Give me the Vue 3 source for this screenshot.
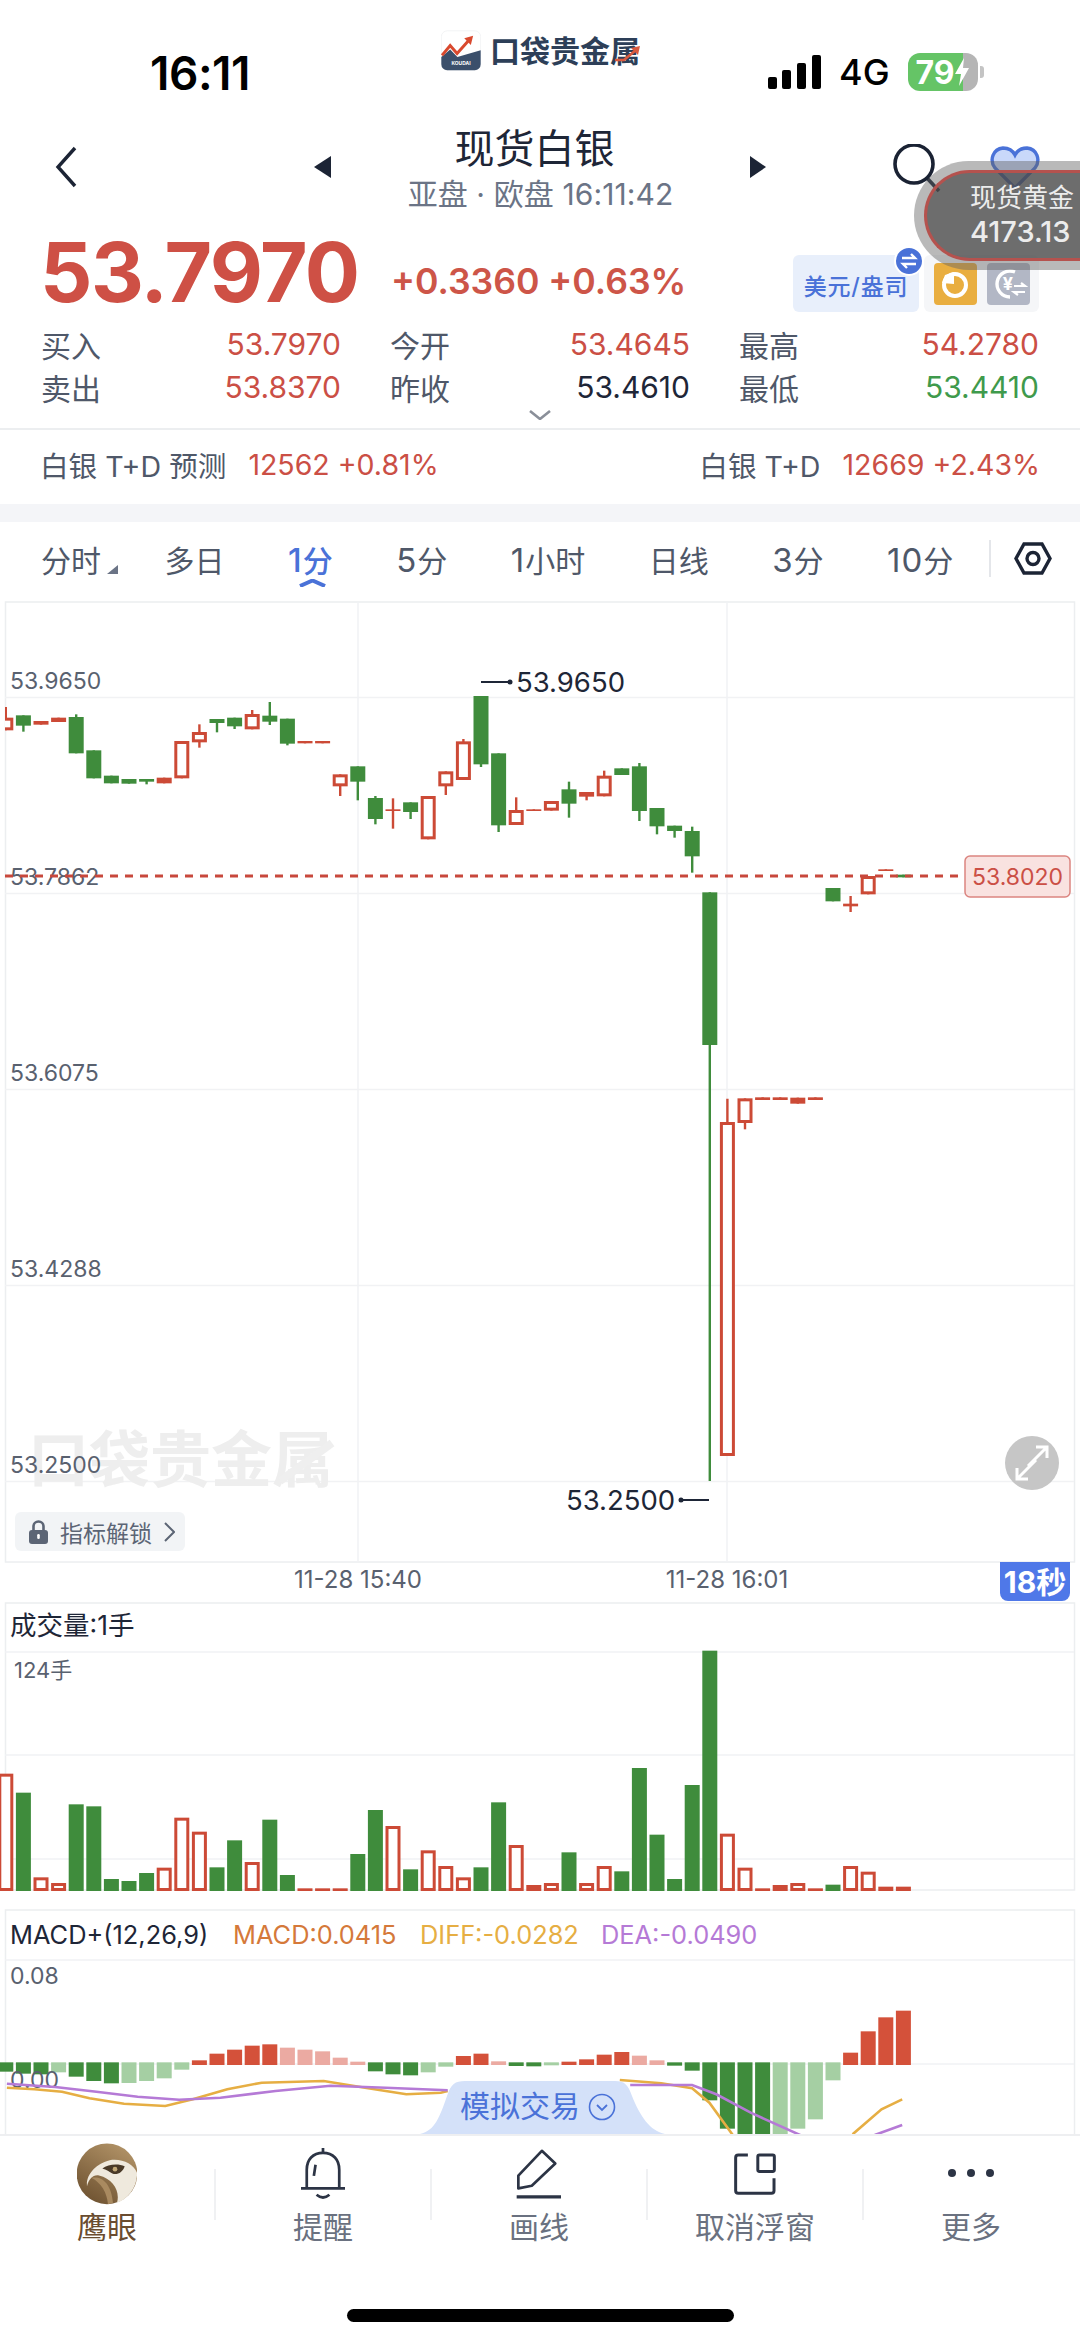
<template>
  <div class="page">
    <!-- status bar -->
    <div class="status">
      <span class="status__time">16:11</span>
      <div class="logo">
        <svg class="logo__icon" width="40" height="41" viewBox="122 60 122 122">
          <rect x="123" y="61" width="120" height="120" rx="18" fill="#fff" stroke="#eceef0" stroke-width="2" />
          <path d="M123 141L150 118L172 141L243 120V163a18 18 0 0 1-18 18H141a18 18 0 0 1-18-18Z" fill="#3b4f6b" />
          <path d="M125 136L150 106L171 130L207 90" fill="none" stroke="#d9492e" stroke-width="9" />
          <path d="M193 84L220 76L213 104Z" fill="#d9492e" />
          <text x="183" y="166" text-anchor="middle" class="logo__koudai">KOUDAI</text>
        </svg>
        <span class="logo__text">口袋贵金属</span>
        <svg class="logo__arrow" width="26" height="16" viewBox="0 0 26 16">
          <path d="M0 14H9L21 4" fill="none" stroke="#d9593e" stroke-width="2.6" />
          <path d="M16 2L25 0L23 9Z" fill="#d9593e" />
        </svg>
      </div>
      <div class="status__right">
        <svg width="53" height="34" viewBox="0 0 53 34">
          <rect x="0" y="22" width="9" height="12" rx="2" />
          <rect x="14" y="15" width="9" height="19" rx="2" />
          <rect x="29" y="8" width="9" height="26" rx="2" />
          <rect x="44" y="0" width="9" height="34" rx="2" />
        </svg>
        <span class="status__net">4G</span>
        <div class="battery">
          <span>79</span>
          <svg width="14" height="28" viewBox="0 0 14 28"><path d="M9 0L0 16H6L4 28L14 10H8Z" fill="#fff" /></svg>
        </div>
      </div>
    </div>

    <!-- title bar -->
    <div class="nav">
      <svg class="nav__back" width="22" height="42" viewBox="0 0 22 42">
        <path d="M20 2L3 21L20 40" fill="none" stroke="#1c2435" stroke-width="3.4" />
      </svg>
      <svg class="nav__tri nav__tri--left" width="17" height="22" viewBox="0 0 17 22"><path d="M17 0V22L0 11Z" fill="#1c2435" /></svg>
      <div class="nav__center">
        <div class="nav__title">现货白银</div>
        <div class="nav__sub">亚盘 · 欧盘 16:11:42</div>
      </div>
      <svg class="nav__tri" width="16" height="22" viewBox="0 0 16 22"><path d="M0 0V22L16 11Z" fill="#1c2435" /></svg>
      <svg class="nav__search" width="48" height="50" viewBox="0 0 48 50">
        <circle cx="21" cy="20" r="19" fill="none" stroke="#1a2233" stroke-width="3.6" />
        <path d="M34 34L46 47" stroke="#1a2233" stroke-width="3.6" />
      </svg>
      <svg class="nav__heart" width="50" height="44" viewBox="0 0 50 44">
        <path d="M25 42L5 22C-1 14 3 3 13 2C19 2 23 5 25 9C27 5 31 2 37 2C47 3 51 14 45 22Z" fill="#c9d8fa" stroke="#4a72d8" stroke-width="3.4" />
      </svg>
    </div>

    <!-- price row -->
    <div class="quote">
      <span class="quote__price">53.7970</span>
      <span class="quote__delta">+0.3360 +0.63%</span>
      <div class="unit">
        美元/盎司
        <svg class="unit__badge" width="30" height="30" viewBox="0 0 30 30">
          <circle cx="15" cy="15" r="14" fill="#4a72d8" stroke="#fff" stroke-width="2" />
          <path d="M8 12H21L17 8M22 18H9L13 22" fill="none" stroke="#fff" stroke-width="2.4" />
        </svg>
      </div>
      <div class="tools">
        <svg class="tools__btn tools__btn--orange" width="43" height="42" viewBox="0 0 43 42">
          <circle cx="21" cy="22" r="11" fill="none" stroke="#fff" stroke-width="4" />
          <path d="M8 20L11 12L20 9V21Z" fill="#fff" />
        </svg>
        <svg class="tools__btn tools__btn--gray" width="43" height="42" viewBox="0 0 43 42">
          <path d="M28 9A13 13 0 1 0 23 34" fill="none" stroke="#fff" stroke-width="3.4" />
          <text x="21" y="27" text-anchor="middle" class="tools__yen">¥</text>
          <path d="M27 23H38L34 20M38 29H27L31 32" fill="none" stroke="#fff" stroke-width="2.2" />
        </svg>
      </div>
    </div>

    <!-- open / close / high / low -->
    <div class="stats">
      <div v-for="item in stats" :key="item.label" class="stats__cell">
        <span class="stats__label">{{ item.label }}</span>
        <span class="stats__value" :class="item.tone">{{ item.value }}</span>
      </div>
      <svg class="stats__more" width="22" height="10" viewBox="0 0 22 10">
        <path d="M1 1L11 9L21 1" fill="none" stroke="#8a8f99" stroke-width="2.6" />
      </svg>
    </div>

    <div class="td">
      <div class="td__item">
        <span class="td__name">白银 T+D 预测</span>
        <span class="td__num">12562 +0.81%</span>
      </div>
      <div class="td__item">
        <span class="td__name">白银 T+D</span>
        <span class="td__num">12669 +2.43%</span>
      </div>
    </div>
    <div class="band"></div>

    <!-- period tabs -->
    <div class="tabs">
      <span
        v-for="tab in tabs"
        :key="tab.num + tab.unit"
        class="tabs__item"
        :class="{ 'tabs__item--on': tab.num === '1' && tab.unit === '分' }"
      >
        <span v-if="tab.num" class="tabs__num">{{ tab.num }}</span>{{ tab.unit }}
        <svg v-if="tab.unit === '分时'" class="tabs__tri" width="11" height="9" viewBox="0 0 11 9"><path d="M11 0V9H0Z" fill="#6b7486" /></svg>
        <svg v-if="tab.num === '1' && tab.unit === '分'" class="tabs__caret" width="27" height="8" viewBox="0 0 27 8">
          <path d="M1 7L13.5 1.5L26 7" fill="none" stroke="#4a72d8" stroke-width="4" />
        </svg>
      </span>
      <span class="tabs__line"></span>
      <svg class="tabs__hex" width="38" height="33" viewBox="0 0 38 33">
        <path d="M10 2H28L36 16.5L28 31H10L2 16.5Z" fill="none" stroke="#1c2435" stroke-width="3.4" />
        <circle cx="19" cy="16.5" r="6" fill="none" stroke="#1c2435" stroke-width="3.4" />
      </svg>
    </div>

    <!-- main candle chart + time axis -->
    <div class="panel">
      <svg class="chart" width="1080" height="1001" viewBox="0 600 1080 1001">
        <defs>
          <clipPath id="plot"><rect x="5" y="600" width="1069" height="1001" /></clipPath>
        </defs>
        <rect x="5.5" y="601" width="1069" height="960" fill="#fff" stroke="#eceef0" stroke-width="1.5" />
        <line v-for="y in mainGrid" :key="y" x1="5" x2="1074" :y1="y" :y2="y" class="grid" />
        <line v-for="x in [358, 727]" :key="x" :x1="x" :x2="x" y1="601" y2="1561" class="grid" />

        <text x="28" y="1481" class="watermark">口袋贵金属</text>
        <path d="M280 1480L332 1442" stroke="#efefef" stroke-width="8" />

        <text v-for="l in mainLabels" :key="l.t" x="10" :y="l.y" class="axis">{{ l.t }}</text>

        <g clip-path="url(#plot)">
          <g v-for="c in candles" :key="c.x">
            <line :x1="c.x" :x2="c.x" :y1="c.wt" :y2="c.wb" :stroke="c.color" stroke-width="2.4" />
            <rect
              v-if="c.hollow"
              :x="c.x - 6"
              :y="c.top + 1.5"
              width="12"
              :height="c.h - 3"
              fill="#fff"
              :stroke="c.color"
              stroke-width="3"
            />
            <rect v-else :x="c.x - 7.5" :y="c.top" width="15" :height="c.h" :fill="c.color" />
          </g>
        </g>

        <line x1="5" x2="965" y1="875" y2="875" stroke="#c8483c" stroke-width="3" stroke-dasharray="8 7" />
        <rect x="965" y="855" width="105" height="41" rx="5" fill="#f9e2e0" stroke="#db8580" stroke-width="1.5" />
        <text x="1017.5" y="884" text-anchor="middle" class="axis axis--red">53.8020</text>

        <path d="M481 681H509" stroke="#1e2637" stroke-width="2" />
        <circle cx="510" cy="681" r="2.5" fill="#1e2637" />
        <text x="516" y="691" class="mark">53.9650</text>
        <path d="M682 1499H709" stroke="#1e2637" stroke-width="2" />
        <circle cx="681" cy="1499" r="2.5" fill="#1e2637" />
        <text x="566" y="1509" class="mark">53.2500</text>

        <circle cx="1032" cy="1462" r="27" fill="#c6c6c6" />
        <path d="M1028 1465L1047 1446M1036 1446H1047V1457M1036 1459L1017 1478M1017 1467V1478H1028" fill="none" stroke="#fff" stroke-width="3" />

        <text x="358" y="1587" text-anchor="middle" class="axis axis--time">11-28 15:40</text>
        <text x="727" y="1587" text-anchor="middle" class="axis axis--time">11-28 16:01</text>
        <path d="M1000 1561H1070V1592a8 8 0 0 1-8 8H1008a8 8 0 0 1-8-8Z" fill="#4f78e8" />
        <text x="1035" y="1592" text-anchor="middle" class="badge">18秒</text>
      </svg>

      <div class="unlock">
        <svg width="19" height="24" viewBox="0 0 19 24">
          <path d="M4.5 11V6.5a5 5 0 0 1 10 0V11" fill="none" stroke="#5c6575" stroke-width="2.6" />
          <rect x="0" y="10" width="19" height="14" rx="3" fill="#5c6575" />
          <rect x="8.2" y="14" width="2.6" height="5" rx="1.3" fill="#fff" />
        </svg>
        <span>指标解锁</span>
        <svg width="11" height="20" viewBox="0 0 11 20"><path d="M1 1L10 10L1 19" fill="none" stroke="#5c6575" stroke-width="2" /></svg>
      </div>
    </div>

    <!-- volume -->
    <svg class="chart" width="1080" height="307" viewBox="0 1601 1080 307">
      <rect x="5.5" y="1602" width="1069" height="287" fill="#fff" stroke="#eceef0" stroke-width="1.5" />
      <line v-for="y in [1651, 1754, 1858]" :key="y" x1="5" x2="1074" :y1="y" :y2="y" class="grid" />
      <text x="10" y="1634" class="legend legend--big">成交量:1手</text>
      <text x="14" y="1677" class="axis axis--small">124手</text>
      <g v-for="b in volumes" :key="b.x">
        <rect v-if="b.hollow" :x="b.x - 6" :y="b.top + 1.5" width="12" :height="b.h - 3" fill="#fff" :stroke="b.color" stroke-width="3" />
        <rect v-else :x="b.x - 7.5" :y="b.top" width="15" :height="b.h" :fill="b.color" />
      </g>
    </svg>

    <!-- macd -->
    <svg class="chart" width="1080" height="225" viewBox="0 1908 1080 225">
      <rect x="5.5" y="1909" width="1069" height="240" fill="#fff" stroke="#eceef0" stroke-width="1.5" />
      <line x1="5" x2="1074" y1="1959" y2="1959" class="grid" />
      <line x1="5" x2="1074" y1="2063" y2="2063" class="grid" />
      <text x="10" y="1943" class="legend">MACD+(12,26,9)</text>
      <text x="233" y="1943" class="legend legend--macd">MACD:0.0415</text>
      <text x="420" y="1943" class="legend legend--diff">DIFF:-0.0282</text>
      <text x="601" y="1943" class="legend legend--dea">DEA:-0.0490</text>
      <text x="10" y="1983" class="axis">0.08</text>
      <g v-for="b in macdBars" :key="b.x">
        <rect :x="b.x - 7.5" :y="b.top" width="15" :height="b.h" :fill="b.fill" />
      </g>
      <text x="10" y="2087" class="axis">0.00</text>
      <polyline v-for="l in macdLines" :key="l.points" :points="l.points" fill="none" :stroke="l.color" stroke-width="2.6" />

      <path d="M420 2133C435 2130 440 2115 447 2095C451 2083 455 2080 465 2080H615C625 2080 628 2084 632 2095C640 2115 650 2130 665 2133Z" fill="#d4e1f9" />
      <text x="460" y="2116" class="sim">模拟交易</text>
      <circle cx="602" cy="2106" r="12.5" fill="none" stroke="#4a72d8" stroke-width="1.6" />
      <path d="M597 2104L602 2109L607 2104" fill="none" stroke="#4a72d8" stroke-width="1.8" />
    </svg>

    <!-- bottom actions -->
    <div class="actions">
      <div class="actions__item actions__item--eagle">
        <svg width="60" height="61" viewBox="52 22 180 183">
          <defs>
            <linearGradient id="eagleBg" x1="0.8" y1="0" x2="0.2" y2="1">
              <stop offset="0" stop-color="#b39468" />
              <stop offset="1" stop-color="#6d5130" />
            </linearGradient>
          </defs>
          <circle cx="142" cy="113" r="91" fill="url(#eagleBg)" />
          <path d="M82 150C78 115 110 82 150 72C185 66 222 82 232 110C234 150 205 190 172 200C182 165 160 128 118 118C100 115 88 128 82 150Z" fill="#efe9dd" />
          <path d="M95 125C125 118 155 140 160 200L145 204C142 170 125 140 95 125Z" fill="#a98a60" />
          <path d="M128 97C145 84 175 82 195 90C190 108 172 118 158 112C150 108 140 100 128 97Z" fill="#4a3a28" />
          <circle cx="166" cy="99" r="7" fill="#c2a877" />
        </svg>
        <span>鹰眼</span>
      </div>
      <i></i>
      <div class="actions__item">
        <svg width="44" height="52" viewBox="725 35 130 155">
          <path d="M742 155V100C742 70 760 50 790 50C820 50 838 70 838 100V155" fill="none" stroke="#2c3445" stroke-width="8" />
          <path d="M725 155H855M790 36V48M768 85L763 118M771 174Q790 190 809 174" fill="none" stroke="#2c3445" stroke-width="8" />
        </svg>
        <span>提醒</span>
      </div>
      <i></i>
      <div class="actions__item">
        <svg width="46" height="50" viewBox="48 38 137 150">
          <path d="M125 44L165 82L95 148L55 156V118Z" fill="none" stroke="#2c3445" stroke-width="8" stroke-linejoin="round" />
          <path d="M50 181H182" stroke="#2c3445" stroke-width="10" />
        </svg>
        <span>画线</span>
      </div>
      <i></i>
      <div class="actions__item">
        <svg width="42" height="42" viewBox="703 50 127 127">
          <path d="M745 56H716Q708 56 708 64V164Q708 172 716 172H816Q824 172 824 164V126" fill="none" stroke="#2c3445" stroke-width="9" />
          <rect x="775" y="56" width="50" height="50" rx="5" fill="none" stroke="#2c3445" stroke-width="9" />
        </svg>
        <span>取消浮窗</span>
      </div>
      <i></i>
      <div class="actions__item">
        <svg width="46" height="52" viewBox="0 0 46 52">
          <circle cx="4" cy="25" r="4" fill="#2c3445" />
          <circle cx="23" cy="25" r="4" fill="#2c3445" />
          <circle cx="42" cy="25" r="4" fill="#2c3445" />
        </svg>
        <span>更多</span>
      </div>
    </div>
    <div class="home"><span></span></div>

    <!-- floating gold ticker -->
    <div class="float">
      <div class="float__inner">
        <span class="float__name">现货黄金</span>
        <span class="float__num">4173.13</span>
      </div>
    </div>
  </div>
</template>

<script setup>
const GREEN = '#3f8c3c'
const RED = '#cc4a36'

const stats = [
  { label: '买入', value: '53.7970', tone: 'up' },
  { label: '今开', value: '53.4645', tone: 'up' },
  { label: '最高', value: '54.2780', tone: 'up' },
  { label: '卖出', value: '53.8370', tone: 'up' },
  { label: '昨收', value: '53.4610', tone: 'flat' },
  { label: '最低', value: '53.4410', tone: 'down' },
]

const tabs = [
  { num: '', unit: '分时' },
  { num: '', unit: '多日' },
  { num: '1', unit: '分' },
  { num: '5', unit: '分' },
  { num: '1', unit: '小时' },
  { num: '', unit: '日线' },
  { num: '3', unit: '分' },
  { num: '10', unit: '分' },
]

const mainGrid = [696.5, 892.5, 1088.5, 1284.5, 1480.5]
const mainLabels = [
  { t: '53.9650', y: 688 },
  { t: '53.7862', y: 884 },
  { t: '53.6075', y: 1080 },
  { t: '53.4288', y: 1276 },
  { t: '53.2500', y: 1472 },
]

const barX = (i) => 5.8 + 17.6 * i

// kind, top, bottom, wick top, wick bottom (y measured as 3x offset from 620)
const rawCandles = [
  ['r', 290, 328, 258, 328], ['g', 283, 314, 283, 332], ['d', 300, 311], ['d', 290, 303],
  ['g', 288, 397, 280, 397], ['g', 388, 472], ['g', 464, 487], ['g', 474, 488],
  ['g', 474, 482, 474, 490], ['r', 470, 487], ['r', 360, 472], ['r', 333, 364, 310, 380],
  ['g', 294, 306, 294, 334], ['g', 290, 316, 290, 324], ['r', 279, 325, 267, 325], ['g', 284, 302, 243, 312],
  ['g', 293, 368, 293, 373], ['d', 360, 367], ['d', 360, 367], ['r', 460, 496, 460, 525],
  ['g', 436, 482, 436, 538], ['g', 531, 594, 525, 610], ['d', 565, 570, 532, 623], ['g', 544, 573, 544, 594],
  ['r', 525, 655], ['r', 451, 496, 451, 522], ['r', 361, 477, 354, 477], ['g', 225, 430, 225, 438],
  ['g', 397, 613, 397, 633], ['r', 567, 612, 529, 612], ['d', 565, 570], ['r', 540, 569],
  ['g', 505, 548, 482, 590], ['r', 513, 527, 513, 538], ['r', 464, 526, 449, 526], ['g', 442, 462],
  ['g', 436, 570, 426, 600], ['g', 561, 616, 561, 640], ['g', 614, 630, 614, 650], ['g', 630, 706, 617, 755],
  ['g', 814, 1272, 814, 2580], ['r', 1503, 2505, 1433, 2505], ['r', 1432, 1506, 1432, 1525], ['d', 1429, 1437],
  ['d', 1429, 1437], ['r', 1430, 1448], ['d', 1429, 1437], ['g', 801, 841],
  ['d', 848, 856, 825, 873], ['r', 765, 820], ['d', 745, 750], ['g', 761, 769],
]

const candles = rawCandles.map(([kind, top, bottom, wt, wb], i) => {
  const toY = (z) => 620 + z / 3
  return {
    x: barX(i),
    top: toY(top),
    h: (bottom - top) / 3,
    wt: toY(wt ?? top),
    wb: toY(wb ?? bottom),
    color: kind === 'g' ? GREEN : RED,
    hollow: kind === 'r',
  }
})

const rawVolumes = [
  ['r', 578], ['g', 635], ['r', 889], ['r', 906], ['g', 670], ['g', 676], ['g', 894], ['g', 900],
  ['g', 876], ['r', 860], ['r', 710], ['r', 752], ['g', 859], ['g', 778], ['r', 843], ['g', 716],
  ['g', 882], ['d', 922], ['d', 922], ['d', 922], ['g', 819], ['g', 687], ['r', 735], ['g', 865],
  ['r', 808], ['r', 855], ['r', 889], ['g', 859], ['g', 664], ['r', 792], ['r', 912], ['r', 906],
  ['g', 814], ['r', 906], ['r', 855], ['g', 871], ['g', 561], ['g', 761], ['g', 894], ['g', 612],
  ['g', 209], ['r', 758], ['r', 860], ['d', 922], ['r', 912], ['r', 906], ['d', 922], ['g', 911],
  ['r', 855], ['r', 872], ['d', 917], ['d', 917],
]

const volumes = rawVolumes.map(([kind, top], i) => ({
  x: barX(i),
  top: 1580 + top / 3,
  h: (930 - top) / 3,
  color: kind === 'g' ? GREEN : RED,
  hollow: kind === 'r',
}))

// value is the far end of the bar, 3x offset from 1900; zero sits at 488
const rawMacd = [
  ['G', 512], ['G', 518], ['G', 520], ['g', 514], ['G', 527], ['G', 540], ['G', 547], ['g', 546],
  ['g', 540], ['g', 532], ['g', 506], ['R', 478], ['R', 458], ['R', 446], ['R', 434], ['R', 430],
  ['r', 440], ['r', 446], ['r', 451], ['r', 470], ['r', 482], ['G', 511], ['G', 520], ['G', 523],
  ['g', 514], ['g', 497], ['R', 465], ['R', 458], ['r', 481], ['G', 495], ['G', 496], ['g', 493],
  ['R', 482], ['R', 475], ['R', 461], ['R', 453], ['r', 464], ['r', 478], ['G', 494], ['G', 509],
  ['G', 598], ['G', 683], ['G', 720], ['G', 720], ['g', 720], ['g', 683], ['g', 655], ['g', 538],
  ['R', 455], ['R', 391], ['R', 349], ['R', 329],
]

const macdFill = { G: GREEN, g: '#a5cfa3', R: '#d4513a', r: '#ebaaa2' }

const macdBars = rawMacd.map(([kind, end], i) => {
  const up = kind === 'R' || kind === 'r'
  const base = up ? 492 : 484
  return {
    x: barX(i),
    top: 1900 + Math.min(end, base) / 3,
    h: Math.abs(end - base) / 3,
    fill: macdFill[kind],
  }
})

const toPoints = (pts) => pts.map(([x, y]) => `${(x / 1.452).toFixed(1)},${(1900 + y / 3).toFixed(1)}`).join(' ')

const macdLines = [
  { color: '#e6ae43', points: toPoints([[10, 560], [50, 565], [90, 572], [130, 592], [180, 608], [240, 615], [280, 595], [330, 565], [380, 545], [470, 540], [530, 560], [590, 580], [640, 575], [650, 570]]) },
  { color: '#e6ae43', points: toPoints([[900, 537], [960, 547], [1005, 562], [1030, 605], [1065, 705]]) },
  { color: '#e6ae43', points: toPoints([[1238, 700], [1280, 625], [1310, 595]]) },
  { color: '#b57ad6', points: toPoints([[10, 548], [80, 558], [140, 572], [200, 587], [260, 596], [320, 590], [400, 570], [480, 554], [560, 560], [650, 568]]) },
  { color: '#b57ad6', points: toPoints([[915, 552], [1005, 552], [1040, 580], [1090, 635], [1165, 705]]) },
  { color: '#b57ad6', points: toPoints([[1270, 702], [1310, 672]]) },
]
</script>

<style scoped>
.page {
  position: relative;
  width: 1080px;
  height: 2341px;
  overflow: hidden;
  background: #fff;
  color: #1e2637;
  font-family: Inter, "Noto Sans CJK SC", sans-serif;
}

.status {
  position: relative;
  height: 125px;
}
.status__time {
  position: absolute;
  left: 150px;
  top: 49px;
  font-size: 46px;
  line-height: 48px;
  font-weight: 600;
  letter-spacing: -0.5px;
  color: #000;
}
.logo {
  position: absolute;
  left: 441px;
  top: 30px;
  display: flex;
  align-items: center;
  gap: 9px;
}
.logo__koudai {
  font: 700 15px Inter, sans-serif;
  fill: #fff;
}
.logo__text {
  font-size: 30px;
  font-weight: 700;
  line-height: 40px;
  color: #2d3f58;
}
.logo__arrow {
  position: absolute;
  left: 174px;
  top: 16px;
}
.status__right {
  position: absolute;
  left: 768px;
  top: 53px;
  display: flex;
  align-items: center;
  gap: 18px;
}
.status__net {
  font-size: 36px;
  line-height: 38px;
  font-weight: 500;
  color: #000;
}
.battery {
  position: relative;
  display: flex;
  align-items: center;
  width: 70px;
  height: 38px;
  padding-left: 8px;
  box-sizing: border-box;
  border-radius: 12px;
  background: linear-gradient(90deg, #65c466 78%, #b5b5b5 78%);
  color: #fff;
  font-size: 32px;
  font-weight: 700;
}
.battery::after {
  content: '';
  position: absolute;
  right: -6px;
  top: 13px;
  width: 4px;
  height: 12px;
  border-radius: 0 3px 3px 0;
  background: #c4c4c4;
}

.nav {
  display: flex;
  align-items: center;
  height: 95px;
}
.nav__back {
  margin-left: 55px;
  margin-top: -11px;
}
.nav__tri {
  margin-top: -11px;
}
.nav__tri--left {
  margin-left: 237px;
}
.nav__center {
  width: 419px;
  margin-top: -4px;
  text-align: center;
}
.nav__title {
  padding-right: 12px;
  font-size: 40px;
  line-height: 46px;
}
.nav__sub {
  font-size: 30px;
  line-height: 44px;
  letter-spacing: 0.1px;
  color: #6b7486;
}
.nav__search {
  margin-left: 127px;
  margin-top: -7px;
}
.nav__heart {
  margin-left: 49px;
  margin-top: -9px;
}

.quote {
  display: flex;
  align-items: center;
  height: 105px;
  padding-left: 40px;
  box-sizing: border-box;
}
.quote__price {
  width: 352px;
  font-size: 82px;
  line-height: 100px;
  font-weight: 700;
  color: #ce5045;
  letter-spacing: -1.5px;
}
.quote__delta {
  width: 401px;
  margin-top: 18px;
  margin-left: -1px;
  font-size: 35.6px;
  font-weight: 600;
  color: #cd5548;
  white-space: nowrap;
}
.unit {
  position: relative;
  width: 126px;
  height: 57px;
  margin-top: 22px;
  margin-left: 1px;
  border-radius: 6px;
  background: #e8effb;
  color: #4a72d8;
  font-size: 23px;
  font-weight: 500;
  line-height: 64px;
  letter-spacing: 0.8px;
  text-align: center;
  white-space: nowrap;
}
.unit__badge {
  position: absolute;
  right: -5px;
  top: -9px;
}
.tools {
  display: flex;
  align-items: flex-start;
  gap: 10px;
  width: 115px;
  height: 57px;
  margin: 22px 0 0 5px;
  padding: 8px 0 0 10px;
  box-sizing: border-box;
  border-radius: 6px;
  background: #f5f6f8;
}
.tools__btn {
  border-radius: 4px;
  flex: none;
}
.tools__btn--orange {
  background: #e9ae40;
}
.tools__btn--gray {
  background: #b2b7c5;
}
.tools__yen {
  font: 700 18px Inter, sans-serif;
  fill: #fff;
}

.stats {
  position: relative;
  display: grid;
  grid-template-columns: repeat(3, 300px);
  grid-auto-rows: 43px;
  column-gap: 49px;
  height: 103px;
  padding-left: 41px;
  border-bottom: 2px solid #eceef0;
}
.stats__cell {
  display: flex;
  align-items: center;
  justify-content: space-between;
  margin-top: -5px;
}
.stats__label {
  font-size: 30px;
  color: #4f5869;
}
.stats__value {
  font-size: 30px;
}
.up {
  color: #cb4f45;
}
.flat {
  color: #1e2637;
}
.down {
  color: #3f9a4c;
}
.stats__more {
  position: absolute;
  left: 529px;
  top: 85px;
}

.td {
  display: flex;
  justify-content: space-between;
  align-items: center;
  height: 68px;
  padding: 0 40px 6px 40px;
}
.td__item {
  display: flex;
  align-items: center;
  gap: 22px;
}
.td__name {
  font-size: 28.6px;
  color: #4f5869;
}
.td__num {
  font-size: 28.5px;
  color: #cb4f45;
}
.band {
  height: 18px;
  background: #f4f5f8;
}

.tabs {
  display: flex;
  align-items: center;
  height: 73px;
  padding: 0 0 6px 41px;
  gap: 63.5px;
  color: #4f5869;
  font-size: 30px;
}
.tabs__item {
  position: relative;
  flex: none;
  white-space: nowrap;
}
.tabs__num {
  font-size: 33px;
  letter-spacing: 1px;
}
.tabs__item--on {
  color: #4a72d8;
  font-weight: 500;
}
.tabs__tri {
  position: absolute;
  right: -17px;
  bottom: 7px;
}
.tabs__caret {
  position: absolute;
  left: 11px;
  top: 42px;
}
.tabs__line {
  flex: none;
  width: 2px;
  height: 37px;
  margin-left: -28px;
  background: #e4e6ea;
}
.tabs__hex {
  flex: none;
  margin-left: -40px;
}

.panel {
  position: relative;
}
.chart {
  display: block;
}
.grid {
  stroke: #f1f2f4;
  stroke-width: 1.5;
}
.watermark {
  font-size: 61px;
  font-weight: 700;
  fill: #eeeeee;
}
.axis {
  font-size: 23px;
  fill: #59616f;
}
.axis--red {
  fill: #cb4f45;
}
.axis--time {
  font-size: 24px;
}
.axis--small {
  font-size: 22px;
}
.mark {
  font-size: 27.5px;
  fill: #1e2637;
}
.badge {
  font-size: 30px;
  font-weight: 700;
  fill: #fff;
}
.legend {
  font-size: 25.4px;
  fill: #1e2637;
}
.legend--big {
  font-size: 26.5px;
}
.legend--macd {
  fill: #d5793a;
}
.legend--diff {
  fill: #e6ae43;
}
.legend--dea {
  fill: #b57ad6;
}
.sim {
  font-size: 30px;
  fill: #4a72d8;
}
.unlock {
  position: absolute;
  left: 15px;
  top: 911px;
  display: flex;
  align-items: center;
  gap: 12px;
  width: 170px;
  height: 39px;
  padding-left: 14px;
  box-sizing: border-box;
  border-radius: 6px;
  background: #f2f4f6;
  color: #5c6575;
  font-size: 23px;
}

.actions {
  position: relative;
  display: flex;
  align-items: flex-start;
  height: 143px;
  padding-right: 2px;
  border-top: 2px solid #eeeff1;
  box-sizing: border-box;
  background: #fff;
}
.actions i {
  flex: none;
  width: 2px;
  height: 51px;
  margin-top: 33px;
  background: #f0f1f3;
}
.actions__item {
  flex: 1;
  display: flex;
  flex-direction: column;
  align-items: center;
  padding-top: 7px;
  color: #6a7180;
  font-size: 30px;
  line-height: 40px;
  white-space: nowrap;
}
.actions__item svg {
  height: 62px;
  margin-bottom: 2px;
}
.actions__item--eagle {
  color: #6a4c30;
}
.home {
  display: flex;
  justify-content: center;
  padding-top: 32px;
}
.home span {
  width: 387px;
  height: 13px;
  border-radius: 7px;
  background: #000;
}

.float {
  position: absolute;
  left: 914px;
  top: 161px;
  right: 0;
  height: 109px;
  padding: 9px 0 9px 10px;
  box-sizing: border-box;
  border-radius: 55px 0 0 55px;
  background: rgba(100, 100, 100, 0.45);
}
.float__inner {
  display: flex;
  flex-direction: column;
  align-items: flex-start;
  height: 91px;
  padding: 9px 0 0 43px;
  box-sizing: border-box;
  border: 3px solid #b5524e;
  border-right: none;
  border-radius: 46px 0 0 46px;
  background: rgba(70, 70, 70, 0.66);
  color: #ececec;
  white-space: nowrap;
}
.float__name {
  font-size: 26px;
  line-height: 32px;
}
.float__num {
  font-size: 29px;
  line-height: 36px;
  font-weight: 500;
}
</style>
